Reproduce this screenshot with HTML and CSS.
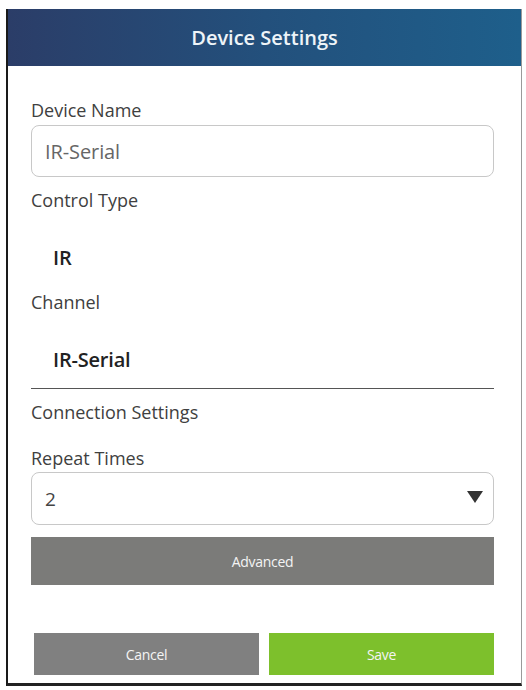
FILE: index.html
```html
<!DOCTYPE html>
<html lang="en">
<head>
  <meta charset="UTF-8">
  <meta name="viewport" content="width=device-width, initial-scale=1.0">
  <title>Device Settings</title>
  <link rel="stylesheet" href="styles.css">
</head>
<body>
  <div class="dialog">
    <header class="dialog-head">Device Settings</header>

    <section class="dialog-body">
      <label class="label label-first">Device Name</label>
      <div class="field">IR-Serial</div>

      <p class="label label-after-field">Control Type</p>
      <p class="value">IR</p>

      <p class="label label-after-value">Channel</p>
      <p class="value">IR-Serial</p>

      <hr class="divider">

      <p class="label label-section">Connection Settings</p>

      <label class="label label-repeat">Repeat Times</label>
      <div class="field field-select">
        <span>2</span>
        <svg class="caret" width="16" height="12" viewBox="0 0 16 12">
          <polygon points="0,0 16,0 8,12" fill="#333"/>
        </svg>
      </div>

      <button class="btn btn-advanced">Advanced</button>

      <div class="actions">
        <button class="btn btn-cancel">Cancel</button>
        <button class="btn btn-save">Save</button>
      </div>
    </section>
  </div>
</body>
</html>
```

FILE: styles.css
```css
body {
  margin: 0;
  background: #fff;
  font-family: "Open Sans", "Noto Sans", sans-serif;
}

.dialog {
  margin: 9px 0 0 6px;
  width: 513px;
  height: 674px;
  border-left: 2px solid #1a1a1a;
  border-right: 1px solid #9a9a9a;
  border-bottom: 3px solid #222;
  display: flex;
  flex-direction: column;
}

.dialog-head {
  height: 57px;
  line-height: 57px;
  text-align: center;
  color: #eef4f8;
  font-size: 20px;
  font-weight: 600;
  background: linear-gradient(90deg, #2b3d68, #23507c 50%, #1e5f8b);
}

.dialog-body {
  padding: 32px 27px 0 23px;
  display: flex;
  flex-direction: column;
}

.label {
  display: block;
  margin: 0;
  font-size: 18px;
  line-height: 24px;
  color: #404040;
}

.label-after-field { margin-top: 11px; }
.label-after-value { margin-top: 20px; }
.label-section { margin-top: 11px; }
.label-repeat { margin-top: 22px; }

.field {
  margin-top: 3px;
  height: 50px;
  border: 1px solid #c8c8c8;
  border-radius: 8px;
  padding: 0 13px;
  display: flex;
  align-items: center;
  font-size: 20px;
  letter-spacing: -0.1px;
  color: #666;
}

.field-select {
  margin-top: 2px;
  height: 51px;
  justify-content: space-between;
  padding-right: 10px;
  font-size: 19px;
  color: #444;
}

.caret {
  margin-top: -4px;
}

.value {
  margin: 34px 0 0 22px;
  font-size: 20px;
  font-weight: 600;
  line-height: 24px;
  letter-spacing: -0.2px;
  color: #222;
}

.divider {
  margin: 16px 0 0;
  border: 0;
  border-top: 1px solid #555;
}

.btn {
  border: 0;
  color: #f4f4f4;
  font-family: inherit;
  font-size: 14px;
  letter-spacing: -0.3px;
}

.btn-advanced {
  margin-top: 12px;
  height: 48px;
  background: #7b7b79;
}

.actions {
  margin-top: 48px;
  padding-left: 3px;
  display: flex;
  gap: 10px;
}

.actions .btn {
  flex: 1;
  height: 42px;
}

.btn-cancel { background: #808080; }
.btn-save { background: #7dc02c; }
```
